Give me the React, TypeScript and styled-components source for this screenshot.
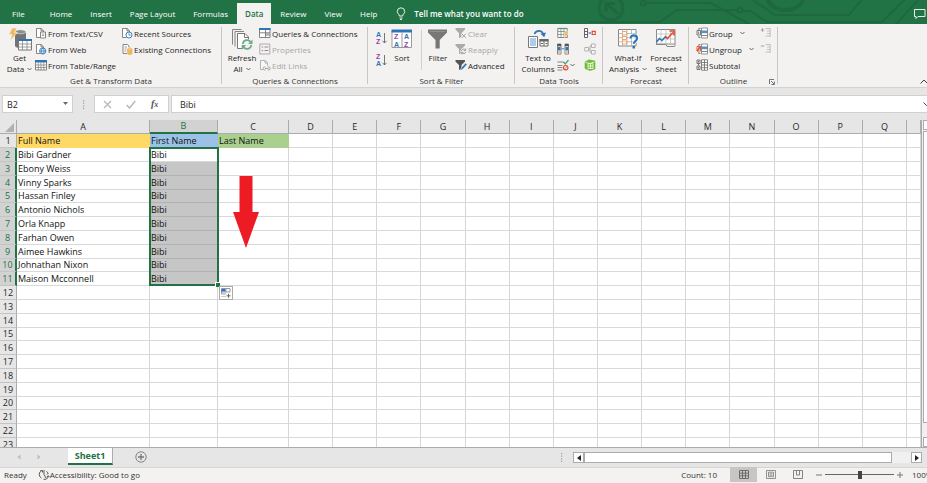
import React from "react";
import styled, { createGlobalStyle, css } from "styled-components";

const GREEN = "#217346";

const GlobalStyle = createGlobalStyle`
  *, *::before, *::after { box-sizing: border-box; }
  body { margin: 0; background: #e6e6e6; }
  body, button, input, table { font-family: "Open Sans", "Noto Sans", sans-serif; font-size: 8px; color: #262626; }
  button { border: 0; padding: 0; margin: 0; background: none; }
  input { border: 0; padding: 0; margin: 0; outline: 0; border-radius: 0; }
  svg { display: block; flex: none; }
`;

/* ---------- layout ---------- */
const Window = styled.div`
  display: flex;
  flex-direction: column;
  height: 100vh;
  overflow: hidden;
  white-space: nowrap;
`;

const TabBar = styled.nav`
  position: relative;
  display: flex;
  align-items: flex-end;
  flex: none;
  height: 24px;
  padding-left: 3px;
  background: ${GREEN};
`;

const Circuit = styled.svg`
  position: absolute;
  top: 0;
  right: 0;
`;

const Tab = styled.button<{ $active?: boolean; $first?: boolean }>`
  height: 21px;
  padding: 0 ${(p) => (p.$active ? 8 : 9)}px;
  margin-right: ${(p) => (p.$first ? 7 : 0)}px;
  line-height: 20px;
  color: ${(p) => (p.$active ? GREEN : "#fff")};
  background: ${(p) => (p.$active ? "#f3f2f1" : "transparent")};
  font-weight: ${(p) => (p.$active ? 600 : 400)};
`;

const TellMe = styled.button`
  display: flex;
  align-items: center;
  gap: 8px;
  height: 21px;
  margin-left: 10px;
  color: #fff;
  font-weight: 600;
`;

const CommentButton = styled.button`
  position: relative;
  height: 21px;
  margin-left: auto;
  padding-right: 1px;
`;

const Ribbon = styled.div`
  display: flex;
  flex: none;
  height: 64px;
  padding-top: 2px;
  background: #f3f2f1;
  border-bottom: 1px solid #d2d2d2;
`;

const Group = styled.section<{ $width: number }>`
  position: relative;
  display: flex;
  flex-direction: column;
  flex: none;
  width: ${(p) => p.$width}px;
  &::after {
    content: "";
    position: absolute;
    right: 0;
    top: 1px;
    bottom: 3px;
    border-right: 1px solid #c8c6c4;
  }
`;

const GroupBody = styled.div<{ $pad: number; $gap?: number }>`
  display: flex;
  gap: ${(p) => p.$gap ?? 0}px;
  height: 48px;
  padding-left: ${(p) => p.$pad}px;
`;

const Caption = styled.div`
  display: flex;
  justify-content: center;
  height: 14px;
  line-height: 14px;
  color: #333;
`;

const Launcher = styled.button`
  position: absolute;
  right: 3px;
  bottom: 2px;
`;

const BigButton = styled.button<{ $width: number }>`
  display: flex;
  flex-direction: column;
  align-items: center;
  width: ${(p) => p.$width}px;
  line-height: 11px;
  height: 48px;
`;

const BigIcon = styled.span`
  display: flex;
  align-items: center;
  height: 26px;
`;

const Label = styled.span`
  display: flex;
  align-items: center;
  gap: 3px;
`;

const Stack = styled.div<{ $width: number }>`
  display: flex;
  flex-direction: column;
  width: ${(p) => p.$width}px;
`;

const SmallButton = styled.button`
  display: flex;
  align-items: center;
  gap: 1px;
  height: 16px;
  padding-bottom: 2px;
  &:disabled { color: #a8a6a4; }
`;

const SmallLabel = styled.span`
  display: flex;
  align-items: center;
  gap: 7px;
`;

const SortStack = styled(Stack)`
  padding-top: 5px;
  gap: 6px;
`;

const Divider = styled.span`
  height: 40px;
  margin: 4px 5px 0 6px;
  border-left: 1px solid #d2d0ce;
`;

const FilterStack = styled(Stack)`
  margin-left: 6px;
`;

const Collapse = styled.button`
  align-self: flex-end;
  margin-left: auto;
  padding-bottom: 3px;
`;

/* ---------- formula bar ---------- */
const FormulaBar = styled.div`
  display: flex;
  align-items: center;
  flex: none;
  height: 32px;
  padding-left: 2px;
`;

const Box = styled.div<{ $width?: number }>`
  display: flex;
  align-items: center;
  justify-content: space-between;
  height: 18px;
  border: 1px solid #d0d0d0;
  background: #fff;
  ${(p) => (p.$width ? css`width: ${p.$width}px;` : css`flex: 1; border-right: 0;`)}
`;

const FxBox = styled(Box)`
  padding: 0 8px;
  margin-right: 2px;
`;

const BarInput = styled.input<{ $inset: number }>`
  flex: 1;
  min-width: 0;
  padding-left: ${(p) => p.$inset}px;
  font-size: 9px;
  background: transparent;
`;

const Grip = styled.span`
  display: flex;
  justify-content: center;
  width: 21px;
`;

/* ---------- sheet ---------- */
const SheetArea = styled.main`
  display: flex;
  flex: 1;
  min-height: 0;
  overflow: hidden;
  border-bottom: 1px solid #ababab;
`;

const GridPane = styled.div`
  position: relative;
  flex: 1;
  min-width: 0;
  overflow: hidden;
  border-right: 1px solid #ababab;
`;

const Table = styled.table`
  width: 100%;
  table-layout: fixed;
  border-collapse: separate;
  border-spacing: 0;
  background: #fff;
`;

const Col = styled.col<{ $width?: number }>`
  ${(p) => p.$width && css`width: ${p.$width}px;`}
`;

const Row = styled.tr`
  height: 14px;
  &:nth-child(5n) { height: 13px; }
`;

const HeadRow = styled.tr`
  height: 14px;
`;

const ColHead = styled.th<{ $on?: boolean }>`
  padding: 0;
  line-height: 12px;
  font-size: 9px;
  font-weight: 400;
  color: ${(p) => (p.$on ? GREEN : "#262626")};
  background: ${(p) => (p.$on ? "#d2d2d2" : "#e6e6e6")};
  border-right: 1px solid #ababab;
  border-bottom: ${(p) => (p.$on ? `2px solid ${GREEN}` : "1px solid #ababab")};
  svg { margin: 2px 2px 0 auto; }
`;

const RowHead = styled.th<{ $on?: boolean }>`
  padding: 0;
  line-height: 12px;
  font-size: 9px;
  font-weight: 400;
  color: ${(p) => (p.$on ? GREEN : "#262626")};
  background: ${(p) => (p.$on ? "#d2d2d2" : "#e6e6e6")};
  border-right: ${(p) => (p.$on ? `2px solid ${GREEN}` : "1px solid #ababab")};
  border-bottom: 1px solid #c4c4c4;
`;

const Cell = styled.td<{ $fill?: string }>`
  padding: 0 0 0 1px;
  line-height: 12px;
  font-size: 9px;
  color: #111;
  overflow: hidden;
  background: ${(p) => p.$fill ?? "#fff"};
  border-right: 1px solid ${(p) => p.$fill ?? "#d6d6d6"};
  border-bottom: 1px solid ${(p) => (p.$fill ? (p.$fill === "#c6c6c6" ? "#b2b2b2" : p.$fill) : "#d9d9d9")};
`;

const Selection = styled.div`
  position: absolute;
  left: 149px;
  top: 27px;
  width: 70px;
  height: 139px;
  border: 2px solid ${GREEN};
  &::after {
    content: "";
    position: absolute;
    right: -3px;
    bottom: -3px;
    width: 5px;
    height: 5px;
    background: ${GREEN};
    border-left: 1px solid #fff;
    border-top: 1px solid #fff;
  }
`;

const FillOptions = styled.button`
  position: absolute;
  left: 219px;
  top: 166px;
  padding: 1px;
  background: #fff;
  border: 1px solid #ababab;
`;

const Arrow = styled.svg`
  position: absolute;
  left: 233px;
  top: 56px;
`;

const VScroll = styled.div`
  display: flex;
  flex-direction: column;
  flex: none;
  width: 5px;
  padding-left: 1px;
  background: #f0f0f0;
`;

const VButton = styled.button`
  height: 10px;
  background: #fff;
  border: 1px solid #ababab;
  border-right: 0;
`;

const VThumb = styled.div`
  flex: 1;
  margin: 1px 0 14px;
  background: #fff;
  border: 1px solid #ababab;
  border-right: 0;
`;

/* ---------- footer ---------- */
const SheetBar = styled.div`
  display: flex;
  align-items: flex-start;
  flex: none;
  height: 19px;
`;

const SheetNav = styled.div`
  display: flex;
  align-items: center;
  justify-content: space-between;
  width: 68px;
  height: 18px;
  padding: 0 27px 0 17px;
`;

const SheetTab = styled.button`
  width: 45px;
  height: 17px;
  padding-top: 1px;
  line-height: 14px;
  font-size: 9px;
  font-weight: 700;
  color: ${GREEN};
  background: #fff;
  border-right: 1px solid #ababab;
  border-bottom: 2px solid ${GREEN};
`;

const AddSheet = styled.button`
  padding: 3px 0 0 22px;
`;

const HScroll = styled.div`
  display: flex;
  align-items: center;
  width: 354px;
  height: 19px;
  margin-left: auto;
  padding: 4px 5px 4px 0;
`;

const HTrack = styled.div`
  flex: 1;
  height: 11px;
  padding-right: 19px;
  background: #f0f0f0;
`;

const HThumb = styled.div`
  height: 11px;
  background: #fff;
  border: 1px solid #ababab;
`;

const HButton = styled.button`
  display: flex;
  align-items: center;
  justify-content: center;
  width: 11px;
  height: 11px;
  background: #fff;
  border: 1px solid #ababab;
`;

const HGrip = styled(Grip)`
  width: 11px;
  margin-right: 6px;
  margin-left: -17px;
`;

const StatusBar = styled.footer`
  display: flex;
  align-items: center;
  flex: none;
  height: 16px;
  padding: 0 0 2px 4px;
  background: #f3f2f1;
  border-top: 1px solid #d6d6d6;
  color: #333;
`;

const Access = styled.button`
  display: flex;
  align-items: center;
  margin-left: 11px;
  color: #333;
`;

const Count = styled.span`
  margin-left: auto;
  margin-right: 13px;
`;

const ViewButton = styled.button<{ $on?: boolean }>`
  display: flex;
  align-items: center;
  justify-content: center;
  width: 27px;
  height: 15px;
  background: ${(p) => (p.$on ? "#c8c6c4" : "transparent")};
`;

const ZoomGroup = styled.div`
  display: flex;
  align-items: center;
  gap: 3px;
  margin-left: 5px;
  width: 111px;
  overflow: hidden;
`;

const ZoomSlider = styled.input`
  appearance: none;
  flex: none;
  width: 69px;
  height: 9px;
  background: linear-gradient(#666, #666) center / 100% 1px no-repeat;
  &::-webkit-slider-thumb {
    appearance: none;
    width: 4px;
    height: 8px;
    background: #444;
  }
`;

const ZoomValue = styled.span`
  margin-left: 6px;
`;

/* ---------- icons ---------- */
const Chevron = ({ c = "#555" }: { c?: string }) => (
  <svg width="5" height="4" viewBox="0 0 5 4"><path d="M.5 1 2.5 3 4.5 1" fill="none" stroke={c} strokeWidth=".9" /></svg>
);

const Icon = ({ children, s = 12 }: { children: React.ReactNode; s?: number }) => (
  <svg width={s} height={s} viewBox={`0 0 ${s} ${s}`} fill="none" stroke="#777" strokeWidth=".9">{children}</svg>
);

const page = <path d="M5.5 10.5h-4v-9h4.700l2.300 2.300v2M6 1.500v2.500h2.500" fill="#fff" />;

const TextFileIcon = () => (
  <Icon>{page}<path d="M5.500 5h5v6h-5z" fill="#fff" /><path d="M6.800 7h2.500M6.800 8.500h2.500" strokeWidth=".7" /></Icon>
);
const WebIcon = () => (
  <Icon>{page}<circle cx="7.700" cy="8" r="3.100" fill="#e9f1fa" stroke="#2e75b6" /><path d="M4.800 8h6M7.700 5c-1.800 2-1.800 4 0 6M7.700 5c1.800 2 1.800 4 0 6" stroke="#2e75b6" strokeWidth=".7" /></Icon>
);
const TableIcon = () => (
  <Icon><path d="M.5 1.500h11v9.500H.5z" fill="#fff" /><path d="M0 1h12v2.500H0z" fill="#2e75b6" stroke="none" /><path d="M.5 6h11M.5 8.500h11M3.300 3.500V11M6 3.500V11M8.800 3.500V11" strokeWidth=".7" /></Icon>
);
const RecentIcon = () => (
  <Icon>{page}<circle cx="8" cy="8" r="3" fill="#fff" stroke="#2e75b6" /><path d="M8 6.200V8.200h1.700" stroke="#2e75b6" strokeWidth=".8" /></Icon>
);
const ConnectionIcon = () => (
  <Icon><path d="M6 10.500H2v-9h4.500L8 3v1.500" fill="#fff" /><path d="M3.500 4h2.500M3.500 6h2M3.500 8h2" strokeWidth=".7" /><path d="M6.500 6v4.500c0 1.300 4.500 1.300 4.500 0V6z" fill="#f0b95c" stroke="#e8ac48" strokeWidth=".6" /><ellipse cx="8.750" cy="6" rx="2.250" ry=".9" fill="#f9dba5" stroke="#e8ac48" strokeWidth=".6" /></Icon>
);
const GetDataIcon = () => (
  <svg width="24" height="24" viewBox="0 0 24 24">
    <path d="M7 5v14c0 2.500 11 2.500 11 0V5z" fill="#737373" /><ellipse cx="12.500" cy="4.800" rx="5.500" ry="2" fill="#8d8d8d" stroke="#f3f2f1" strokeWidth=".6" />
    <path d="M4 1h5L6.500 5.500h3L2 14l2-6.500H1z" fill="#f0b95c" stroke="#f3f2f1" strokeWidth=".6" />
    <path d="M10.500 12.500h13v10.500h-13z" fill="#fff" stroke="#777" /><path d="M10 12h14v2H10z" fill="#2e75b6" />
    <path d="M10.500 17h13M10.500 20h13M14.500 14v9M19 14v9" stroke="#888" strokeWidth=".8" />
  </svg>
);
const RefreshIcon = () => (
  <svg width="22" height="24" viewBox="0 0 22 24" fill="none" stroke="#777">
    <path d="M1.500 17.500v-15h9M4 19.500V4.500h9" strokeWidth=".9" />
    <path d="M6.500 21.500v-15h7.500l3.500 3.500v11.500z" fill="#fff" /><path d="M13.500 6.500V10.500h4" />
    <circle cx="16" cy="17.500" r="5.500" fill="#f3f2f1" stroke="none" />
    <path d="M11.800 17a4.300 4.300 0 0 1 8-1.800M20.300 18a4.300 4.300 0 0 1-8 1.800" stroke="#6aab8b" strokeWidth="1.700" />
    <path d="M21.500 12.500v4.500h-4.500zM10.700 22.500V18h4.500z" fill="#6aab8b" stroke="none" />
  </svg>
);
const QueriesIcon = () => (
  <Icon><path d="M.5 1.500h10.500v9H.5z" fill="#fff" /><path d="M0 1h11.500v2H0z" fill="#2e75b6" stroke="none" /><path d="M.5 5.800h10.500M6.500 3v7.500M6.500 8h4.500" /><path d="M7 6.200h3.700v1.500H7z" fill="#aaa" stroke="none" /></Icon>
);
const PropertiesIcon = () => (
  <Icon><path d="M.8 1h10v10h-10z" fill="#f4f0f2" stroke="#a5a0a3" /><path d="M2.700 4h1.500M2.700 7.500h1.500M5.500 4h3.800M5.500 7.500h3.800" stroke="#a07f94" strokeWidth="1.200" /></Icon>
);
const LinksIcon = () => (
  <Icon><path d="M4 10.500H1.500v-9h4.700l2.300 2.300v3" fill="#f7f7f7" stroke="#aaa" /><path d="M6 1.500V4h2.500" stroke="#aaa" /><path d="M6.500 8h-1a1.400 1.400 0 0 0 0 2.900h1M8.800 8h1a1.400 1.400 0 0 1 0 2.900h-1M6 9.500h3.400" stroke="#999" /></Icon>
);
const SortArrowIcon = ({ top, bottom, a, b }: { top: string; bottom: string; a: string; b: string }) => (
  <svg width="12" height="14" viewBox="0 0 12 14" fontFamily="Liberation Sans, sans-serif" fontSize="7" fontWeight="700">
    <text x="0" y="6" fill={a}>{top}</text>
    <text x="0" y="13" fill={b}>{bottom}</text>
    <path d="M8.500 2v10M6.500 9.800l2 2.200 2-2.200" fill="none" stroke="#666" strokeWidth=".9" />
  </svg>
);
const SortIcon = () => (
  <svg width="22" height="20" viewBox="0 0 22 20">
    <path d="M1 2h19.500v16.500H1z" fill="#fff" stroke="#999" /><path d="M.5 0.500h20.500v3H.5z" fill="#2e75b6" /><path d="M11 3.500v15" stroke="#999" />
    <g fontFamily="Liberation Sans, sans-serif" fontSize="7" fontWeight="700">
      <text x="3" y="10" fill="#8f44ad">Z</text><text x="3" y="18" fill="#2e75b6">A</text>
      <text x="13" y="10" fill="#2e75b6">A</text><text x="13" y="18" fill="#8f44ad">Z</text>
    </g>
  </svg>
);
const FilterIcon = () => (
  <svg width="22" height="20" viewBox="0 0 22 20"><path d="M1 .5h19v3L12.700 11v8.500H8.500V11L1 3.500z" fill="#777" /><path d="M2.500 2.500h16" stroke="#999" strokeWidth=".7" /></svg>
);
const FunnelMini = ({ kind }: { kind: "clear" | "reapply" | "advanced" }) => {
  const c = kind === "advanced" ? "#555" : "#aaa";
  return (
    <Icon>
      <path d="M.5 1h9.500v1.500L6.500 6v4L4 11V6L.5 2.500z" fill={c} stroke="none" />
      {kind === "clear" && <path d="M6.800 6.800l4 4M10.800 6.800l-4 4" stroke="#f3f2f1" strokeWidth="2.200" />}
      {kind === "clear" && <path d="M6.800 6.800l4 4M10.800 6.800l-4 4" stroke="#999" />}
      {kind === "reapply" && <><circle cx="8.500" cy="8.300" r="3.100" fill="#f3f2f1" stroke="none" /><path d="M6.300 8a2.300 2.300 0 0 1 4.200-.9M10.800 8.800a2.300 2.300 0 0 1-4.200.8M10.700 5.500v2H8.800M6.400 11.200V9.300h2" stroke="#999" /></>}
      {kind === "advanced" && <path d="M5.500 11.500l1-3 4-4.500 1.500 1.500-4 4.500z" fill="#2e75b6" stroke="#f3f2f1" strokeWidth=".5" />}
    </Icon>
  );
};
const ColumnsIcon = () => (
  <svg width="22" height="20" viewBox="0 0 22 20" fill="none">
    <path d="M1.500 7.500h9v11h-9z" fill="#fff" stroke="#777" /><path d="M3 10h6M3 12h6M3 14h6M3 16h6" stroke="#5b9bd5" />
    <path d="M13 10.500h8v6.500h-8z" fill="#fff" stroke="#666" /><path d="M12.500 10h9v2.500h-9z" fill="#666" /><path d="M17 12v5M14 14.500h2M18.500 14.500h2" stroke="#666" />
    <path d="M7.500 5C9 1 14.500.5 16.500 5.500" stroke="#2e75b6" strokeWidth="1.700" /><path d="M13.500 4.800l3.700 3.500 1.800-4.800z" fill="#2e75b6" />
  </svg>
);
const FlashIcon = () => (
  <Icon><path d="M.8 1.500h9.500v9H.8z" fill="#fff" /><path d="M.8 4.500h9.500M.8 7.500h9.500M4 1.500v9M7 1.500v9" strokeWidth=".7" /><path d="M1 1.500h9" stroke="#4f9f7b" strokeWidth="1.300" /><path d="M8 4h3.500L10 6.500h1.500L7 11.500l1.200-3.700H6.800z" fill="#f0b95c" stroke="#f3f2f1" strokeWidth=".4" /></Icon>
);
const DuplicatesIcon = () => (
  <Icon><path d="M.5 1h3.500v10H.5zM8 1h3.500v10H8z" fill="#fff" stroke="#666" strokeWidth=".8" /><path d="M.5 1h3.500v2.300H.5zM8 1h3.500v2.300H8z" fill="#555" stroke="none" /><path d="M1 4h2.500v3.500H1zM8.500 4H11v3.500H8.500z" fill="#2e75b6" stroke="none" /><path d="M4.500 5.800h2.800" stroke="#2e75b6" /><path d="M1 8h2.500v2.500H1zM8.500 8H11v2.500H8.500z" fill="#f2c48a" stroke="none" /></Icon>
);
const ValidationIcon = () => (
  <Icon><path d="M.5 3h6M.5 6.500h5M.5 8.500h5M.5 11h5" stroke="#777" /><path d="M6.500 3l1.700 2 3.300-4" stroke="#4f9f7b" strokeWidth="1.200" /><circle cx="8.700" cy="8.700" r="2.200" stroke="#e04a2e" strokeWidth="1.100" fill="#fff" /><path d="M7.300 10.200l2.900-2.900" stroke="#e04a2e" /></Icon>
);
const ConsolidateIcon = () => (
  <Icon><path d="M.5 1.500h3v9h-3zM.5 4.500h3M.5 7.500h3" fill="#fff" stroke="#555" /><path d="M4.500 6h2.500" stroke="#2e75b6" strokeWidth="1.200" /><path d="M8.200 4.300h3v3.200h-3z" stroke="#e04a2e" strokeWidth="1.200" fill="#fff" /></Icon>
);
const RelationIcon = () => (
  <Icon><path d="M.8 4.500h3.700v3.500H.8zM7.500 1h3.700v3.500H7.500zM7.500 7.500h3.700V11H7.500z" stroke="#aaa" fill="#f8f8f8" /><path d="M4.500 6.200H6V3h1.500M6 6v3.200h1.500" stroke="#aaa" /></Icon>
);
const ModelIcon = () => (
  <Icon><path d="M1 3l4-2.200L11 2v8l-5 1.600L1 9.500z" fill="#6cbe2c" stroke="#6cbe2c" strokeWidth=".6" /><path d="M1.500 3.500L6 4.500l4.500-1.500M4 4.700h5v4.800H4zM6.500 4.700v4.800M4 7h5" stroke="#fff" strokeWidth=".8" /></Icon>
);
const WhatIfIcon = () => (
  <svg width="22" height="22" viewBox="0 0 22 22" fill="none">
    <path d="M1.500 1.500h17.500v16.500H1.500z" fill="#fff" stroke="#888" /><path d="M1.500 5.500H19M1.500 9.700H19M1.500 13.800H19M5.500 1.500V18M10 1.500V18M14.500 1.500V18" stroke="#aaa" strokeWidth=".8" />
    <path d="M5.500 3.500h4v3.500h-4zM5.500 8.500h4v3h-4zM5.500 13h4v3h-4z" stroke="#f3a56e" fill="#fff" />
    <path d="M13.500 10.500c0-4.200 6.500-4 6.500 0 0 2.800-3.200 2.600-3.200 5.300" stroke="#fff" strokeWidth="3.600" />
    <path d="M13.500 10.500c0-4.200 6.500-4 6.500 0 0 2.800-3.200 2.600-3.200 5.300" stroke="#2e75b6" strokeWidth="2.200" /><path d="M15.500 17.800h2.500v2.700h-2.500z" fill="#2e75b6" />
  </svg>
);
const ForecastIcon = () => (
  <svg width="22" height="22" viewBox="0 0 22 22" fill="none">
    <path d="M1.500 1.500h18.500v14.500H1.500z" fill="#fff" stroke="#888" /><path d="M1.500 6H20M1.500 11H20M6 1.500V16M11 1.500V16M15.500 1.500V16" stroke="#bbb" strokeWidth=".8" /><path d="M1 16.500h10l1 2h7.500l1-2" stroke="#888" />
    <path d="M1.500 14l3-3.500 2.500 2 4-4.500" stroke="#2e75b6" strokeWidth="1.600" /><path d="M10.500 9l2 1.500 5.500-6" stroke="#e04a2e" strokeWidth="1.600" /><path d="M14.500 3h4.500v4.500" stroke="#e04a2e" strokeWidth="1.600" />
  </svg>
);
const GroupIcon = ({ red }: { red?: boolean }) => (
  <Icon><path d="M5.500 1h6v10h-6z" fill="#fff" stroke="#888" /><path d="M5.500 3.500h6v2.700h-6z" fill="#2e75b6" stroke="none" opacity=".8" /><path d="M5.500 8.500h6" /><path d="M4.500 1.500h-1.700v1.500M4.500 10.500H2.800V9" /><path d="M1 3.500h3.500v4.500H1zM2.700 4.500v2.500" stroke={red ? "#e04a2e" : "#666"} fill="#fff" />{red && <path d="M1 8l3.500-4.500" stroke="#e04a2e" strokeWidth="1.500" />}</Icon>
);
const SubtotalIcon = () => (
  <Icon><path d="M5.500.8h6v10.400h-6zM8.500.8v10.400M5.500 3.500h6M5.500 6h6M5.500 8.700h6" fill="#fff" stroke="#666" strokeWidth=".8" /><path d="M1 1h3v3.500H1zM1 7h3v3.500H1zM2.500 2v1.500M2.500 8v1.500M2.500 5v1.500" stroke="#666" /></Icon>
);
const DetailIcon = ({ plus }: { plus?: boolean }) => (
  <Icon><path d="M.8 3h3.500" stroke="#999" />{plus && <path d="M2.500 1.200v3.600" stroke="#999" />}<path d="M5.500 1.500h4.500M7 4h3M7 6.500h3M5.500 9h4.500M10.200 1v9" stroke="#bbb" /></Icon>
);
const GripDots = () => (
  <svg width="3" height="9" viewBox="0 0 3 9" fill="#a0a0a0"><path d="M1 0h1.200v1.200H1zM1 2.600h1.200v1.200H1zM1 5.200h1.200v1.200H1zM1 7.800h1.200V9H1z" /></svg>
);

/* ---------- data ---------- */
const names = ["Bibi Gardner", "Ebony Weiss", "Vinny Sparks", "Hassan Finley", "Antonio Nichols", "Orla Knapp", "Farhan Owen", "Aimee Hawkins", "Johnathan Nixon", "Maison Mcconnell"];
const letters = "ABCDEFGHIJKLMNOPQ".split("");
const rows = Array.from({ length: 23 }, (_, i) => i + 1);
const tabs = ["File", "Home", "Insert", "Page Layout", "Formulas", "Data", "Review", "View", "Help"];

const Small = ({ icon, children, disabled }: { icon: React.ReactNode; children?: React.ReactNode; disabled?: boolean }) => (
  <SmallButton disabled={disabled}>{icon}{children && <SmallLabel>{children}</SmallLabel>}</SmallButton>
);

function cellValue(r: number, c: string) {
  if (r === 1) return ({ A: "Full Name", B: "First Name", C: "Last Name" } as Record<string, string>)[c];
  if (r > 11) return undefined;
  return c === "A" ? names[r - 2] : c === "B" ? "Bibi" : undefined;
}

function cellFill(r: number, c: string) {
  if (r === 1) return ({ A: "#ffd966", B: "#9bc2e6", C: "#a9d08e" } as Record<string, string>)[c];
  return c === "B" && r > 2 && r < 12 ? "#c6c6c6" : undefined;
}

export default function App() {
  return (
    <Window>
      <GlobalStyle />
      <TabBar>
        <Circuit width="347" height="24" viewBox="0 0 347 24" fill="none" stroke="#1e673f" strokeWidth="2">
          <circle cx="31" cy="8" r="12" strokeWidth="3" /><path d="M38 14L27 4M26 12V3.500h9" strokeWidth="3" />
          <circle cx="63" cy="3" r="2.500" /><path d="M66 3h65l38 21M10 22h70l17-12h60" /><circle cx="160" cy="10" r="2.500" />
          <path d="M162 11h8l17 11h115l32-32M173 0l22 15h74l14-17M316 24l26-28" /><path d="M188 0a18 13 0 0 0 35 0" strokeWidth="4" />
        </Circuit>
        {tabs.map((t) => <Tab key={t} $active={t === "Data"} $first={t === "File"}>{t}</Tab>)}
        <TellMe>
          <svg width="10" height="13" viewBox="0 0 10 13" fill="none" stroke="#fff"><path d="M3.300 9C3.300 7 1.300 6.700 1.300 4.500a3.700 3.700 0 0 1 7.400 0C8.700 6.700 6.700 7 6.700 9zM3.500 11h3M4 12.500h2" strokeWidth=".9" /></svg>
          Tell me what you want to do
        </TellMe>
        <CommentButton aria-label="Comments">
          <svg width="13" height="12" viewBox="0 0 13 12" fill="none" stroke="#fff"><path d="M1.500 1.500h10.500v7H5l-2 2v-2H1.500z" strokeWidth=".9" /></svg>
        </CommentButton>
      </TabBar>

      <Ribbon>
        <Group $width={222}>
          <GroupBody $pad={4}>
            <BigButton $width={31}><BigIcon><GetDataIcon /></BigIcon><span>Get</span><Label>Data <Chevron /></Label></BigButton>
            <Stack $width={86}>
              <Small icon={<TextFileIcon />}>From Text/CSV</Small>
              <Small icon={<WebIcon />}>From Web</Small>
              <Small icon={<TableIcon />}>From Table/Range</Small>
            </Stack>
            <Stack $width={90}>
              <Small icon={<RecentIcon />}>Recent Sources</Small>
              <Small icon={<ConnectionIcon />}>Existing Connections</Small>
            </Stack>
          </GroupBody>
          <Caption>Get &amp; Transform Data</Caption>
        </Group>

        <Group $width={146}>
          <GroupBody $pad={3}>
            <BigButton $width={34}><BigIcon><RefreshIcon /></BigIcon><span>Refresh</span><Label>All <Chevron /></Label></BigButton>
            <Stack $width={100}>
              <Small icon={<QueriesIcon />}>Queries &amp; Connections</Small>
              <Small icon={<PropertiesIcon />} disabled>Properties</Small>
              <Small icon={<LinksIcon />} disabled>Edit Links</Small>
            </Stack>
          </GroupBody>
          <Caption>Queries &amp; Connections</Caption>
        </Group>

        <Group $width={147}>
          <GroupBody $pad={8}>
            <SortStack $width={13}>
              <Small icon={<SortArrowIcon top="A" bottom="Z" a="#2e75b6" b="#8f44ad" />} />
              <Small icon={<SortArrowIcon top="Z" bottom="A" a="#8f44ad" b="#2e75b6" />} />
            </SortStack>
            <BigButton $width={26}><BigIcon><SortIcon /></BigIcon><span>Sort</span></BigButton>
            <Divider />
            <BigButton $width={22}><BigIcon><FilterIcon /></BigIcon><span>Filter</span></BigButton>
            <FilterStack $width={58}>
              <Small icon={<FunnelMini kind="clear" />} disabled>Clear</Small>
              <Small icon={<FunnelMini kind="reapply" />} disabled>Reapply</Small>
              <Small icon={<FunnelMini kind="advanced" />}>Advanced</Small>
            </FilterStack>
          </GroupBody>
          <Caption>Sort &amp; Filter</Caption>
        </Group>

        <Group $width={88}>
          <GroupBody $pad={4}>
            <BigButton $width={38}><BigIcon><ColumnsIcon /></BigIcon><span>Text to</span><span>Columns</span></BigButton>
            <Stack $width={27}>
              <Small icon={<FlashIcon />} />
              <Small icon={<DuplicatesIcon />} />
              <Small icon={<ValidationIcon />}><Chevron /></Small>
            </Stack>
            <Stack $width={12}>
              <Small icon={<ConsolidateIcon />} />
              <Small icon={<RelationIcon />} disabled />
              <Small icon={<ModelIcon />} />
            </Stack>
          </GroupBody>
          <Caption>Data Tools</Caption>
        </Group>

        <Group $width={86}>
          <GroupBody $pad={6} $gap={3}>
            <BigButton $width={38}><BigIcon><WhatIfIcon /></BigIcon><span>What-If</span><Label>Analysis <Chevron /></Label></BigButton>
            <BigButton $width={32}><BigIcon><ForecastIcon /></BigIcon><span>Forecast</span><span>Sheet</span></BigButton>
          </GroupBody>
          <Caption>Forecast</Caption>
        </Group>

        <Group $width={89}>
          <GroupBody $pad={7}>
            <Stack $width={64}>
              <Small icon={<GroupIcon />}>Group <Chevron /></Small>
              <Small icon={<GroupIcon red />}>Ungroup <Chevron /></Small>
              <Small icon={<SubtotalIcon />}>Subtotal</Small>
            </Stack>
            <Stack $width={12}>
              <Small icon={<DetailIcon plus />} disabled />
              <Small icon={<DetailIcon />} disabled />
            </Stack>
          </GroupBody>
          <Caption>Outline</Caption>
          <Launcher aria-label="Outline settings">
            <svg width="6" height="6" viewBox="0 0 6 6" fill="none" stroke="#555" strokeWidth=".8"><path d="M.5 5V.5H5M2 2l3 3M5.400 2.500v3h-3" /></svg>
          </Launcher>
        </Group>
        <Collapse aria-label="Collapse ribbon">
          <svg width="7" height="5" viewBox="0 0 7 5" fill="none" stroke="#444"><path d="M.5 4.500L4 1l3.500 3.500" /></svg>
        </Collapse>
      </Ribbon>

      <FormulaBar>
        <Box $width={71}>
          <BarInput $inset={4} aria-label="Name box" defaultValue="B2" />
          <svg width="11" height="4" viewBox="0 0 11 4"><path d="M2 0h5L4.500 3z" fill="#666" /></svg>
        </Box>
        <Grip><GripDots /></Grip>
        <FxBox $width={75}>
          <svg width="9" height="9" viewBox="0 0 9 9"><path d="M1 1l7 7M8 1L1 8" stroke="#b5b5b5" strokeWidth="1.200" /></svg>
          <svg width="10" height="9" viewBox="0 0 10 9"><path d="M.7 5l2.800 3L9.300 1" fill="none" stroke="#b5b5b5" strokeWidth="1.400" /></svg>
          <svg width="10" height="12" viewBox="0 0 10 12" fontFamily="Liberation Serif, serif" fontStyle="italic" fontWeight="700" fill="#555">
            <text x="1" y="9" fontSize="10">f<tspan fontSize="8">x</tspan></text>
          </svg>
        </FxBox>
        <Box>
          <BarInput $inset={8} aria-label="Formula" defaultValue="Bibi" />
          <svg width="4" height="5" viewBox="0 0 4 5" fill="none" stroke="#444"><path d="M.5.500l3 3 3-3" /></svg>
        </Box>
      </FormulaBar>

      <SheetArea>
        <GridPane>
          <Table>
            <colgroup>
              <Col $width={17} /><Col $width={133} /><Col $width={68} /><Col $width={71} />
              {letters.slice(3).map((l) => <Col key={l} />)}
              <Col $width={14} />
            </colgroup>
            <thead>
              <HeadRow>
                <ColHead><svg width="9" height="9" viewBox="0 0 9 9"><path d="M9 0v9H0z" fill="#b1b1b1" /></svg></ColHead>
                {letters.map((l) => <ColHead key={l} $on={l === "B"}>{l}</ColHead>)}
                <ColHead />
              </HeadRow>
            </thead>
            <tbody>
              {rows.map((r) => (
                <Row key={r}>
                  <RowHead $on={r > 1 && r < 12}>{r}</RowHead>
                  {letters.map((l) => <Cell key={l} $fill={cellFill(r, l)}>{cellValue(r, l)}</Cell>)}
                  <Cell />
                </Row>
              ))}
            </tbody>
          </Table>
          <Selection />
          <FillOptions aria-label="Auto fill options">
            <svg width="10" height="10" viewBox="0 0 10 10" fill="none"><path d="M.5.500h8.500v3.500H.5zM5 .500v3.500M.500 4v2H5" stroke="#999" /><path d="M.5 1h4v2.500h-4z" fill="#2f6fe0" /><path d="M.5 8.500H5" stroke="#999" strokeDasharray="1 1" /><path d="M7.500 5.800v4M5.500 7.800h4" stroke="#666" /></svg>
          </FillOptions>
          <Arrow width="26" height="72" viewBox="0 0 26 72"><path d="M6.500 0h13v36H26L13 72 0 36h6.500z" fill="#ed1c24" /></Arrow>
        </GridPane>
        <VScroll>
          <VButton aria-label="Scroll up" />
          <VThumb />
          <VButton aria-label="Scroll down" />
        </VScroll>
      </SheetArea>

      <SheetBar>
        <SheetNav>
          <svg width="4" height="6" viewBox="0 0 4 6"><path d="M3.500.5v5L.5 3z" fill="#bbb" /></svg>
          <svg width="4" height="6" viewBox="0 0 4 6"><path d="M.5.500v5L3.500 3z" fill="#bbb" /></svg>
        </SheetNav>
        <SheetTab>Sheet1</SheetTab>
        <AddSheet aria-label="New sheet">
          <svg width="12" height="12" viewBox="0 0 12 12" fill="none" stroke="#777"><circle cx="6" cy="6" r="5.200" strokeWidth=".9" /><path d="M6 3v6M3 6h6" strokeWidth="1.300" /></svg>
        </AddSheet>
        <HScroll>
          <HGrip><GripDots /></HGrip>
          <HButton aria-label="Scroll left"><svg width="4" height="6" viewBox="0 0 4 6"><path d="M4 0v6L0 3z" fill="#222" /></svg></HButton>
          <HTrack><HThumb /></HTrack>
          <HButton aria-label="Scroll right"><svg width="4" height="6" viewBox="0 0 4 6"><path d="M0 0v6l4-3z" fill="#222" /></svg></HButton>
        </HScroll>
      </SheetBar>

      <StatusBar>
        <span>Ready</span>
        <Access>
          <svg width="12" height="11" viewBox="0 0 12 11" fill="none" stroke="#444" strokeWidth=".9"><path d="M3.500 1.800A4 4 0 0 0 3.500 9M2.500 1.500h2v2M6 1v4.500M6 5.500l2 3.500M5.500 10.200a4 4 0 0 0 4.800-3M8.800 8l1.500-1.300L11.500 8M8.500 2.500l1.800 1.500L9 5.500" /></svg>
          Accessibility: Good to go
        </Access>
        <Count>Count: 10</Count>
        <ViewButton $on aria-label="Normal view"><svg width="10" height="9" viewBox="0 0 10 9" fill="none" stroke="#666"><path d="M.5.500h9v8h-9zM.5 3.200h9M.5 5.800h9M3.500.500v8M6.500.500v8" strokeWidth=".9" /></svg></ViewButton>
        <ViewButton aria-label="Page layout view"><svg width="10" height="9" viewBox="0 0 10 9" fill="none" stroke="#777"><path d="M.5.500h9v8h-9zM2.500 2.200h5v4.500h-5zM3.500 3.800h3M3.500 5.200h3" strokeWidth=".8" /></svg></ViewButton>
        <ViewButton aria-label="Page break preview"><svg width="10" height="9" viewBox="0 0 10 9" fill="none" stroke="#777"><path d="M.5.500h9v8h-9zM3.500.500v4.500h3V.500" strokeWidth=".9" /></svg></ViewButton>
        <ZoomGroup>
          <svg width="6" height="6" viewBox="0 0 6 6"><path d="M0 3h6" stroke="#777" /></svg>
          <ZoomSlider type="range" aria-label="Zoom" min={0} max={200} defaultValue={101} />
          <svg width="6" height="6" viewBox="0 0 6 6"><path d="M0 3h6M3 0v6" stroke="#777" /></svg>
          <ZoomValue>100%</ZoomValue>
        </ZoomGroup>
      </StatusBar>
    </Window>
  );
}
